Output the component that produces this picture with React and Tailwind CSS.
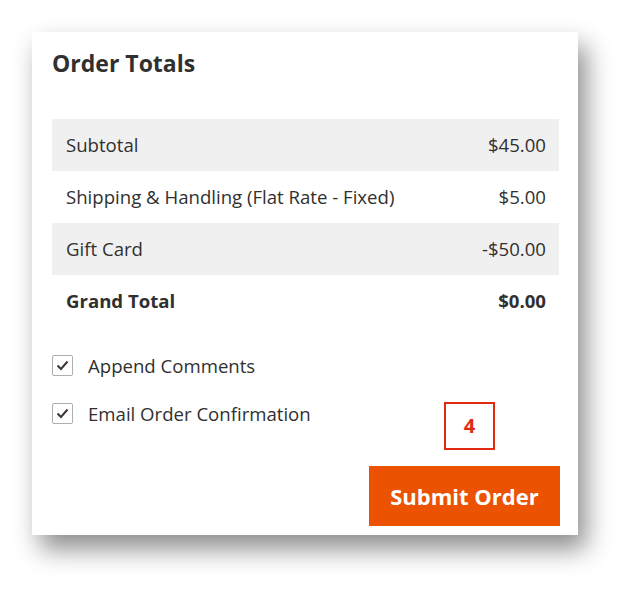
import React from "react";

const rows = [
  { label: "Subtotal", value: "$45.00", shade: true },
  { label: "Shipping & Handling (Flat Rate - Fixed)", value: "$5.00" },
  { label: "Gift Card", value: "-$50.00", shade: true },
  { label: "Grand Total", value: "$0.00", bold: true },
];

const Check = ({ label }) => (
  <label className="flex items-center h-[27px]">
    <span className="w-[21px] h-[21px] border border-[#adadad] rounded-[2px] bg-white flex items-center justify-center">
      <svg width="13" height="11" viewBox="0 0 13 11">
        <path d="M1.5 5.5 L5 9 L11.5 1.5" fill="none" stroke="#41362f" strokeWidth="2" />
      </svg>
    </span>
    <span className="ml-[15px] text-[18.6px] text-[#303030]">{label}</span>
  </label>
);

export default function App() {
  return (
    <div
      className="w-[643px] h-[601px] bg-white pt-[32px] pl-[32px]"
      style={{ fontFamily: '"Open Sans", "Liberation Sans", sans-serif' }}
    >
      <div className="w-[546px] h-[503px] bg-white pl-5 pr-[19px] pt-[18px] shadow-[8px_14px_24px_rgba(0,0,0,0.45)]">
        {/* title */}
        <h2 className="text-[23px] leading-[27px] font-bold text-[#303030]">Order Totals</h2>

        {/* totals table */}
        <div className="mt-[42px]">
          {rows.map((r) => (
            <div
              key={r.label}
              className={`h-[52px] pl-[14px] pr-[13px] flex items-center justify-between text-[18.6px] text-[#303030] ${
                r.shade ? "bg-[#f0f0f0]" : "bg-white"
              } ${r.bold ? "font-bold" : ""}`}
            >
              <span>{r.label}</span>
              <span>{r.value}</span>
            </div>
          ))}
        </div>

        {/* options */}
        <div className="mt-[25px]">
          <Check label="Append Comments" />
        </div>
        <div className="mt-[21px] flex items-start">
          <Check label="Email Order Confirmation" />
          <div className="ml-auto mr-[64px] mt-[2px] w-[51px] h-[48px] border-2 border-[#e02b12] flex items-center justify-center text-[20px] font-bold text-[#e02b12]">
            4
          </div>
        </div>

        <div className="mt-[16px] flex justify-end mr-[-1px]">
          <button className="w-[191px] h-[60px] bg-[#eb5202] text-white text-[22px] font-bold">
            Submit Order
          </button>
        </div>
      </div>
    </div>
  );
}
